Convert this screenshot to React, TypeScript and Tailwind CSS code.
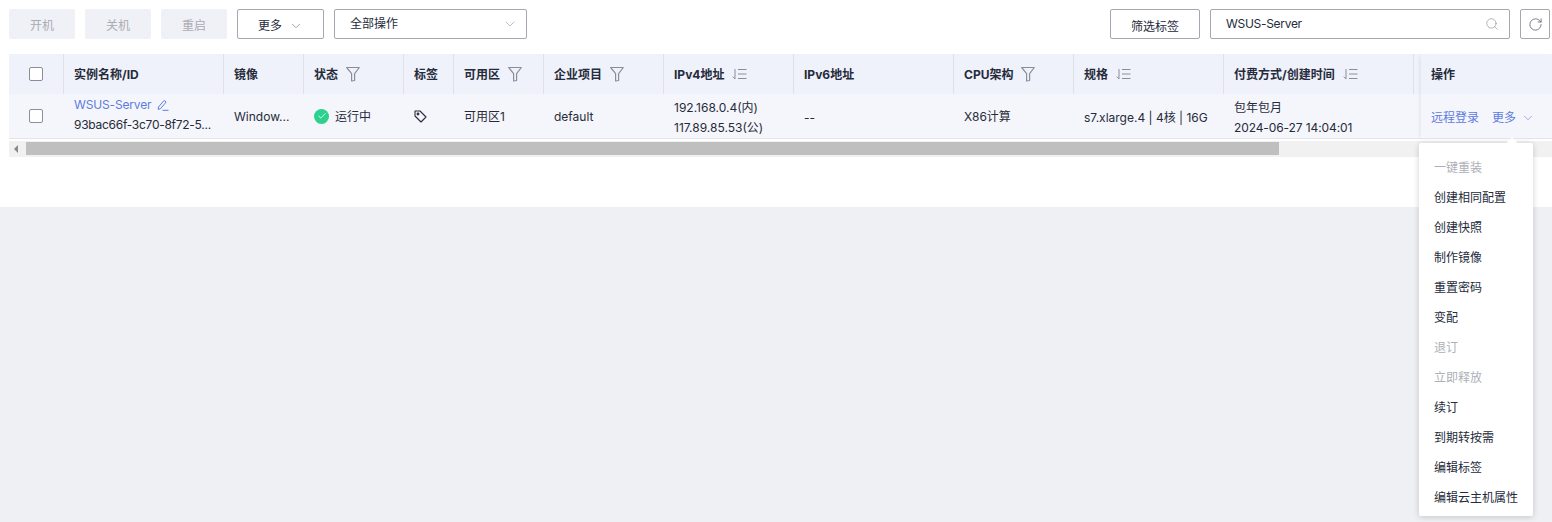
import React from "react";
import { ChevronDown, RotateCw, Search, Check } from "lucide-react";

const FONT = "font-['Inter','Noto_Sans_CJK_SC',sans-serif]";

interface Column {
  title: string;
  width: string;
  icon?: "filter" | "sort";
}

const columns: Column[] = [
  { title: "实例名称/ID", width: "w-[160px]" },
  { title: "镜像", width: "w-[80px]" },
  { title: "状态", width: "w-[100px]", icon: "filter" },
  { title: "标签", width: "w-[50px]" },
  { title: "可用区", width: "w-[90px]", icon: "filter" },
  { title: "企业项目", width: "w-[120px]", icon: "filter" },
  { title: "IPv4地址", width: "w-[130px]", icon: "sort" },
  { title: "IPv6地址", width: "w-[160px]" },
  { title: "CPU架构", width: "w-[120px]", icon: "filter" },
  { title: "规格", width: "w-[150px]", icon: "sort" },
  { title: "付费方式/创建时间", width: "w-[190px]", icon: "sort" },
];

const menu = [
  { label: "一键重装", disabled: true },
  { label: "创建相同配置" },
  { label: "创建快照" },
  { label: "制作镜像" },
  { label: "重置密码" },
  { label: "变配" },
  { label: "退订", disabled: true },
  { label: "立即释放", disabled: true },
  { label: "续订" },
  { label: "到期转按需" },
  { label: "编辑标签" },
  { label: "编辑云主机属性" },
];

const FilterIcon = () => (
  <svg width="14" height="16" viewBox="0 0 14 16" fill="none" stroke="#8a8e99" strokeWidth="1.2" className="ml-[8px] shrink-0">
    <path d="M0.7 1.5h12.6L8.6 7.6v6.9L5.6 15V7.6z" strokeLinejoin="round" />
  </svg>
);

const SortIcon = () => (
  <svg width="15" height="12" viewBox="0 0 15 12" fill="none" stroke="#8a8e99" strokeWidth="1" className="ml-[8px] shrink-0">
    <path d="M3 1v10M3 11L0.8 8.6M6 1.5h8.5M6 6h8.5M6 10.5h8.5" />
  </svg>
);

const EditIcon = () => (
  <svg width="12" height="12" viewBox="0 0 12 12" fill="none" stroke="#5e7ce0" strokeWidth="1" className="ml-[6px]">
    <path d="M1.5 8l5.6-6.6 2 1.7-5.6 6.6-2.3.7zM5.5 11.3h6" />
  </svg>
);

const TagIcon = () => (
  <svg width="13" height="13" viewBox="0 0 13 13" fill="none" stroke="#252b3a" strokeWidth="1.1">
    <path d="M1 1h5l6 6-5 5-6-6z" strokeLinejoin="round" />
    <circle cx="4" cy="4" r="0.9" />
  </svg>
);

const Checkbox = () => <span className="w-[14px] h-[14px] border border-[#8a8e99] rounded-[2px] bg-white block" />;

const App: React.FC = () => {
  return (
    <div className={`${FONT} relative h-[522px] overflow-hidden bg-[#eff0f4] text-[12px] text-[#252b3a]`}>
      <div className="h-[207px] bg-white px-[9px] pt-[9px]">
        {/* toolbar */}
        <div className="flex items-center h-[30px]">
          {["开机", "关机", "重启"].map((t) => (
            <button key={t} className="w-[66px] h-[30px] mr-[10px] rounded-[2px] bg-[#f0f1f6] text-[#a9acb3] text-[12px] pt-[4px]">
              {t}
            </button>
          ))}
          <button className="w-[87px] h-[30px] border border-[#a5a8b0] rounded-[2px] flex items-center justify-center">
            <span className="pt-[4px]">更多</span>
            <ChevronDown size={14} strokeWidth={1} className="ml-[7px] mt-[3px] text-[#5f6570]" />
          </button>
          <div className="ml-[10px] w-[193px] h-[30px] border border-[#a5a8b0] rounded-[2px] flex items-center justify-between pl-[15px] pr-[8px]">
            全部操作
            <ChevronDown size={16} strokeWidth={1} className="text-[#9a9ea8]" />
          </div>
          <button className="ml-auto w-[90px] h-[30px] border border-[#a5a8b0] rounded-[2px] pt-[5px]">筛选标签</button>
          <div className="ml-[10px] w-[300px] h-[30px] border border-[#a5a8b0] rounded-[2px] flex items-center justify-between pl-[15px] pr-[10px]">
            <span className="tracking-[-0.3px]">WSUS-Server</span>
            <Search size={14} strokeWidth={1} className="text-[#7d828c]" />
          </div>
          <button className="ml-[10px] mr-[-7px] w-[30px] h-[30px] border border-[#a5a8b0] rounded-[2px] flex items-center justify-center">
            <RotateCw size={15} strokeWidth={1.2} className="text-[#4f5560]" />
          </button>
        </div>

        {/* table */}
        <div className="mt-[15px] mr-[-9px] flex">
          <div className="flex-1 min-w-0 overflow-hidden">
            <div className="flex w-max h-[40px] bg-[#eff2fa] font-bold">
              <div className="w-[55px] pl-[20px] flex items-center border-r border-[#dfe1e6]">
                <Checkbox />
              </div>
              {columns.map((c) => (
                <div key={c.title} className={`${c.width} px-[10px] flex items-center border-r border-[#dfe1e6]`}>
                  <span className="pt-[2px]">{c.title}</span>
                  {c.icon === "filter" && <FilterIcon />}
                  {c.icon === "sort" && <SortIcon />}
                </div>
              ))}
              <div className="w-[20px]" />
            </div>
            <div className="flex w-max h-[45px] bg-[#f5f6fb] border-b border-[#e3e5ea]">
              <div className="w-[55px] pl-[20px] flex items-center">
                <Checkbox />
              </div>
              <div className="w-[160px] px-[10px] pb-[2px] flex flex-col justify-center leading-[20px]">
                <span className="flex items-center text-[#5e7ce0]">
                  <span className="tracking-[-0.15px]">WSUS-Server</span>
                  <EditIcon />
                </span>
                <span className="whitespace-nowrap tracking-[-0.27px]">93bac66f-3c70-8f72-5...</span>
              </div>
              <div className="w-[80px] px-[10px] pt-[2px] flex items-center">Window...</div>
              <div className="w-[100px] px-[10px] flex items-center">
                <span className="w-[15px] h-[15px] mr-[6px] rounded-full bg-[#2bd18d] flex items-center justify-center">
                  <Check size={10} strokeWidth={2} className="text-white" />
                </span>
                <span className="pt-[2px]">运行中</span>
              </div>
              <div className="w-[50px] px-[10px] flex items-center">
                <TagIcon />
              </div>
              <div className="w-[90px] px-[10px] pt-[2px] flex items-center">可用区1</div>
              <div className="w-[120px] px-[10px] pt-[2px] flex items-center">default</div>
              <div className="w-[130px] px-[10px] pt-[3px] flex flex-col justify-center leading-[20px]">
                <span>192.168.0.4(内)</span>
                <span>117.89.85.53(公)</span>
              </div>
              <div className="w-[160px] px-[10px] pt-[3px] flex items-center">--</div>
              <div className="w-[120px] px-[10px] pt-[2px] flex items-center">X86计算</div>
              <div className="w-[150px] px-[10px] pt-[3px] flex items-center whitespace-nowrap">s7.xlarge.4 | 4核 | 16G</div>
              <div className="w-[190px] px-[10px] pt-[3px] flex flex-col justify-center leading-[20px]">
                <span>包年包月</span>
                <span className="tracking-[-0.1px]">2024-06-27 14:04:01</span>
              </div>
              <div className="w-[20px]" />
            </div>
          </div>
          <div className="w-[131px] shrink-0 shadow-[-3px_0_4px_-2px_rgba(0,0,0,0.08)] z-10">
            <div className="h-[40px] bg-[#eff2fa] font-bold flex items-center pl-[10px]">
              <span className="pt-[2px]">操作</span>
            </div>
            <div className="h-[45px] bg-[#f5f6fb] border-b border-[#e3e5ea] flex items-center pl-[10px] text-[#5e7ce0]">
              <span className="pt-[4px]">远程登录</span>
              <span className="ml-[13px] pt-[4px]">更多</span>
              <ChevronDown size={14} strokeWidth={1} className="ml-[5px] mt-[3px]" />
            </div>
          </div>
        </div>

        {/* scrollbar */}
        <div className="mt-[2px] mr-[-9px] h-[16px] bg-[#f1f1f1] flex items-start pt-[1px]">
          <span className="mt-[3px] ml-[5px] w-0 h-0 border-y-[4px] border-y-transparent border-r-[4px] border-r-[#8a8a8a]" />
          <span className="ml-[8px] w-[1253px] h-[13px] bg-[#bfbfbf]" />
        </div>
      </div>

      {/* dropdown */}
      <div className="absolute left-[1419px] top-[143px] w-[114px] h-[373px] bg-white rounded-[2px] shadow-[0_1px_6px_rgba(0,0,0,0.18)] py-[9px] pl-[15px] z-20">
        <span className="absolute right-[17px] top-[-4px] w-[8px] h-[8px] bg-white rotate-45" />
        {menu.map((m) => (
          <div key={m.label} className={`h-[30px] pt-[1px] flex items-center whitespace-nowrap ${m.disabled ? "text-[#adb0b8]" : ""}`}>
            {m.label}
          </div>
        ))}
      </div>
    </div>
  );
};

export default App;
